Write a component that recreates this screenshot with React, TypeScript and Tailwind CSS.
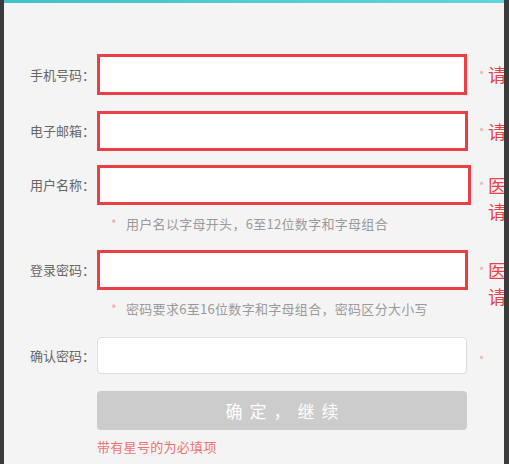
const font = { fontFamily: '"Noto Sans CJK SC", "Noto Sans", sans-serif' };

type Row = {
  label: string;
  h: string;
  w: string;
  mt: string;
  err?: string[];
  plain?: boolean;
};

function FieldRow({ label, h, w, mt, err, plain }: Row) {
  return (
    <div className={`flex items-start ${mt}`}>
      <div className={`w-[91px] mr-[2px] shrink-0 flex items-center justify-end text-[13px] text-[#666] ${h}`}>{label}</div>
      <div className="w-[380px] shrink-0">
        <div
          className={
            plain
              ? `${w} ${h} bg-white border border-[#dcdcdc] rounded-[4px]`
              : `${w} ${h} bg-white border-[3px] border-[#ec3f45]`
          }
        />
      </div>
      <div className={`flex items-start ${h} ${plain ? 'pt-[9px]' : 'pt-[7px]'}`}>
        <span className="w-[11px] shrink-0 pl-[2px] text-[11px] leading-[26px] text-[#f3a3a3]">*</span>
        {err && (
          <div className="w-[20px] text-[18px] leading-[26px] text-[#e8434a]">
            {err.map((e, i) => (
              <div key={i} className="whitespace-nowrap">{e}</div>
            ))}
          </div>
        )}
      </div>
    </div>
  );
}

function Hint({ text, mt }: { text: string; mt: string }) {
  return (
    <div className={`flex items-center h-[20px] ${mt} pl-[107px] text-[13px] tracking-[0.3px]`}>
      <span className="w-[15px] text-[12px] text-[#f3a3a3]">*</span>
      <span className="text-[#9a9a9a]">{text}</span>
    </div>
  );
}

export default function App() {
  return (
    <div className="w-[509px] h-[464px] bg-[#3b3b3b] flex pl-[4px] pr-[5px] overflow-hidden" style={font}>
      <div className="flex-1 bg-[#f4f4f4] overflow-hidden flex flex-col">
        <div className="h-[3px] bg-gradient-to-r from-[#3cc3c8] via-[#4fcdd3] to-[#5fd5dc]" />
        <div className="pt-[51px] flex flex-col">
          <FieldRow label="手机号码：" h="h-[41px]" w="w-[370px]" mt="" err={['请输入手机号码']} />
          <FieldRow label="电子邮箱：" h="h-[40px]" w="w-[371px]" mt="mt-[16px]" err={['请输入电子邮箱']} />
          <FieldRow label="用户名称：" h="h-[40px]" w="w-[374px]" mt="mt-[14px]" err={['医', '请']} />
          <Hint text="用户名以字母开头，6至12位数字和字母组合" mt="mt-[9px]" />
          <FieldRow label="登录密码：" h="h-[40px]" w="w-[371px]" mt="mt-[16px]" err={['医', '请']} />
          <Hint text="密码要求6至16位数字和字母组合，密码区分大小写" mt="mt-[9px]" />
          <FieldRow label="确认密码：" h="h-[37px]" w="w-[370px]" mt="mt-[18px]" plain />
          <div className="pl-[93px] mt-[17px]">
            <button className="w-[370px] h-[39px] bg-[#cccccc] rounded-[4px] text-white text-[17px] tracking-[7px] pl-[7px]">
              确定，继续
            </button>
          </div>
          <div className="pl-[93px] mt-[8px] h-[18px] leading-[18px] text-[13px] text-[#ef7272] tracking-[0.3px]">
            带有星号的为必填项
          </div>
        </div>
      </div>
    </div>
  );
}
